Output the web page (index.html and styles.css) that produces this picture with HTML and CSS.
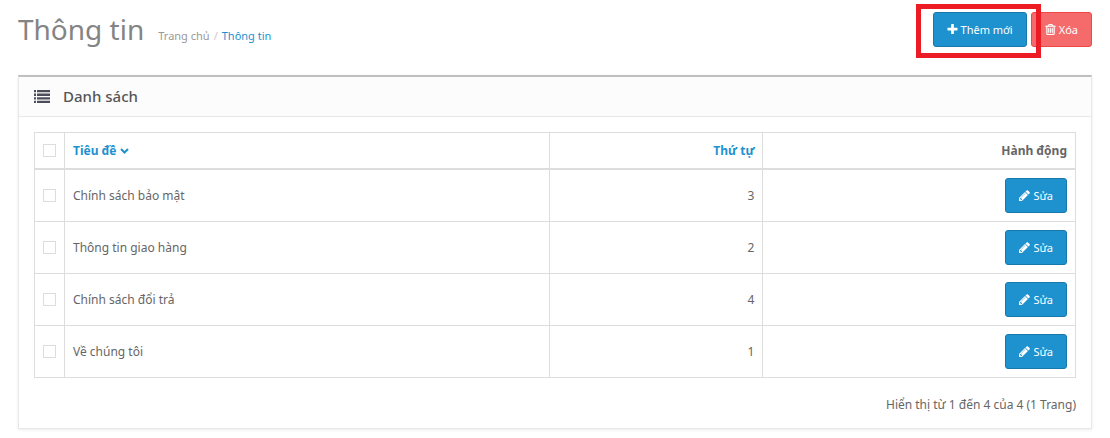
FILE: index.html
```
<!DOCTYPE html>
<html lang="vi">
<head>
    <meta charset="UTF-8">
    <meta name="viewport" content="width=device-width, initial-scale=1.0">
    <title>Thông tin</title>
    <link rel="stylesheet" href="styles.css">
</head>
<body>
    <svg class="sprite" aria-hidden="true">
        <symbol id="pencil" viewBox="128 128 1536 1536">
            <path d="M491 1536l91-91-235-235-91 91v107h128v128h107zm523-928q0-22-22-22-10 0-17 7l-542 542q-7 7-7 17 0 22 22 22 10 0 17-7l542-542q7-7 7-17zm-54-192l416 416-832 832h-416v-416zm683 96q0 53-37 90l-166 166-416-416 166-165q36-38 90-38 53 0 91 38l235 234q37 39 37 91z"/>
        </symbol>
    </svg>

    <header class="page-header">
        <h1>Thông tin</h1>
        <nav class="breadcrumb">
            <a href="#home">Trang chủ</a>
            <a href="#info" class="current">Thông tin</a>
        </nav>
        <div class="actions">
            <span class="highlight">
                <button type="button" class="btn btn-primary">
                    <svg class="icon" viewBox="192 128 1408 1536"><path d="M1600 736v192q0 40-28 68t-68 28h-416v416q0 40-28 68t-68 28h-192q-40 0-68-28t-28-68v-416h-416q-40 0-68-28t-28-68v-192q0-40 28-68t68-28h416v-416q0-40 28-68t68-28h192q40 0 68 28t28 68v416h416q40 0 68 28t28 68z"/></svg>
                    Thêm mới
                </button>
            </span>
            <button type="button" class="btn btn-danger">
                <svg class="icon icon-trash" viewBox="192 128 1408 1536"><path d="M704 736v576q0 14-9 23t-23 9h-64q-14 0-23-9t-9-23v-576q0-14 9-23t23-9h64q14 0 23 9t9 23zm256 0v576q0 14-9 23t-23 9h-64q-14 0-23-9t-9-23v-576q0-14 9-23t23-9h64q14 0 23 9t9 23zm256 0v576q0 14-9 23t-23 9h-64q-14 0-23-9t-9-23v-576q0-14 9-23t23-9h64q14 0 23 9t9 23zm128 724v-948h-896v948q0 22 7 40.5t14.5 27 10.5 8.5h832q3 0 10.5-8.5t14.5-27 7-40.5zm-672-1076h448l-48-117q-7-9-17-11h-317q-10 2-17 11zm928 32v64q0 14-9 23t-23 9h-96v948q0 83-47 143.5t-113 60.5h-832q-66 0-113-58.5t-47-141.5v-952h-96q-14 0-23-9t-9-23v-64q0-14 9-23t23-9h309l70-167q15-37 54-63t79-26h320q40 0 79 26t54 63l70 167h309q14 0 23 9t9 23z"/></svg>
                Xóa
            </button>
        </div>
    </header>

    <main class="panel">
        <div class="panel-heading">
            <svg class="list-icon" viewBox="0 0 16 13"><path d="M0 0h2v2.300H0zM3 0h13v2.300H3zM0 3.600h2v2.300H0zM3 3.600h13v2.300H3zM0 7.200h2v2.300H0zM3 7.200h13v2.300H3zM0 10.700h2V13H0zM3 10.700h13V13H3z"/></svg>
            <h2>Danh sách</h2>
        </div>
        <div class="panel-body">
            <table>
                <colgroup>
                    <col class="col-check">
                    <col class="col-title">
                    <col class="col-order">
                    <col class="col-action">
                </colgroup>
                <thead>
                    <tr>
                        <th><input type="checkbox" aria-label="Chọn tất cả"></th>
                        <th><a href="#title">Tiêu đề<svg class="caret" viewBox="0 0 9 6"><path d="M1 1l3.500 3.500L8 1"/></svg></a></th>
                        <th class="right"><a href="#order">Thứ tự</a></th>
                        <th class="right">Hành động</th>
                    </tr>
                </thead>
                <tbody>
                    <tr>
                        <td><input type="checkbox" id="row1"></td>
                        <td><label for="row1">Chính sách bảo mật</label></td>
                        <td class="right">3</td>
                        <td class="right"><button type="button" class="btn btn-primary"><svg class="icon"><use href="#pencil"/></svg>Sửa</button></td>
                    </tr>
                    <tr>
                        <td><input type="checkbox" id="row2"></td>
                        <td><label for="row2">Thông tin giao hàng</label></td>
                        <td class="right">2</td>
                        <td class="right"><button type="button" class="btn btn-primary"><svg class="icon"><use href="#pencil"/></svg>Sửa</button></td>
                    </tr>
                    <tr>
                        <td><input type="checkbox" id="row3"></td>
                        <td><label for="row3">Chính sách đổi trả</label></td>
                        <td class="right">4</td>
                        <td class="right"><button type="button" class="btn btn-primary"><svg class="icon"><use href="#pencil"/></svg>Sửa</button></td>
                    </tr>
                    <tr>
                        <td><input type="checkbox" id="row4"></td>
                        <td><label for="row4">Về chúng tôi</label></td>
                        <td class="right">1</td>
                        <td class="right"><button type="button" class="btn btn-primary"><svg class="icon"><use href="#pencil"/></svg>Sửa</button></td>
                    </tr>
                </tbody>
            </table>
            <p class="results">Hiển thị từ 1 đến 4 của 4 (1 Trang)</p>
        </div>
    </main>
</body>
</html>
```
FILE: styles.css
```
* {
    box-sizing: border-box;
}

body {
    margin: 0;
    padding: 12px 18px 8px;
    background-color: #fff;
    color: #666;
    font-family: "Noto Sans", "Open Sans", sans-serif;
    font-size: 12px;
    line-height: 17px;
}

a {
    color: #1e91cf;
    text-decoration: none;
}

.sprite {
    display: none;
}

.page-header {
    display: flex;
    align-items: flex-start;
    margin-bottom: 28px;
}

h1 {
    margin: 0;
    color: #848484;
    font-size: 28px;
    font-weight: 400;
    line-height: 35px;
}

.breadcrumb {
    display: flex;
    margin-left: 14px;
    padding-top: 15px;
    font-size: 11px;
}

.breadcrumb a {
    color: #999;
}

.breadcrumb .current {
    color: #1e91cf;
}

.breadcrumb .current::before {
    content: "/";
    padding: 0 4px;
    color: #ccc;
}

.actions {
    display: flex;
    gap: 4px;
    margin-left: auto;
}

.highlight {
    position: relative;
}

.highlight::after {
    content: "";
    position: absolute;
    top: -8px;
    right: -14px;
    bottom: -11px;
    left: -17px;
    border: 5px solid #ed1c24;
    pointer-events: none;
}

.btn {
    display: inline-flex;
    align-items: center;
    gap: 3px;
    height: 35px;
    padding: 0 13px;
    border: 1px solid;
    border-radius: 3px;
    color: #fff;
    font: inherit;
    font-size: 11px;
    cursor: pointer;
    vertical-align: middle;
}

.btn-primary {
    background-color: #1e91cf;
    border-color: #1978ab;
}

.btn-danger {
    background-color: #f56b6b;
    border-color: #f24545;
}

.icon {
    width: 11px;
    height: 11px;
    fill: currentColor;
}

.icon-trash {
    stroke: currentColor;
    stroke-width: 40;
}

.panel {
    border: 1px solid #e8e8e8;
    border-top: 2px solid #bfbfbf;
    box-shadow: 0 1px 3px rgba(0, 0, 0, 0.08);
}

.panel-heading {
    display: flex;
    align-items: center;
    gap: 13px;
    height: 40px;
    padding: 0 15px;
    background-color: #fcfcfc;
    border-bottom: 1px solid #e8e8e8;
    color: #555;
}

.list-icon {
    width: 16px;
    height: 13px;
    fill: #4c4d5a;
}

h2 {
    margin: 0;
    font-size: 15px;
    font-weight: 500;
}

.panel-body {
    padding: 15px;
}

table {
    width: 100%;
    border-collapse: collapse;
    table-layout: fixed;
}

.col-check {
    width: 30px;
}

/* the three wide columns share what the checkbox column leaves */
.col-title {
    width: 46.6%;
}

.col-order {
    width: 20.5%;
}

th,
td {
    padding: 8px;
    border: 1px solid #ddd;
    text-align: left;
    vertical-align: middle;
}

th {
    height: 36px;
    border-bottom-width: 2px;
}

td {
    height: 52px;
}

.right {
    text-align: right;
}

.caret {
    width: 9px;
    height: 6px;
    margin-left: 3px;
    fill: none;
    stroke: currentColor;
    stroke-width: 2;
    vertical-align: middle;
}

input[type="checkbox"] {
    display: block;
    appearance: none;
    width: 13px;
    height: 13px;
    margin: 0;
    border: 1px solid #ddd;
    background-color: #fff;
}

input[type="checkbox"]:checked {
    background-color: #1e91cf;
}

.results {
    margin: 18px 0 0;
    text-align: right;
}
```
